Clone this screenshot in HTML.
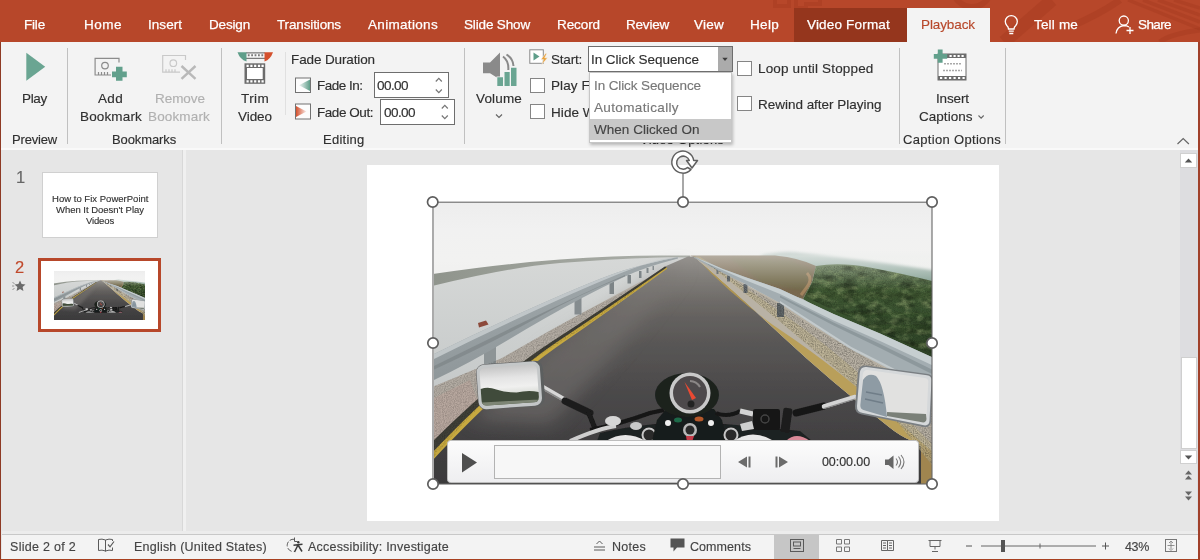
<!DOCTYPE html>
<html><head><meta charset="utf-8"><title>PowerPoint Playback</title>
<style>
html,body{margin:0;padding:0}
body{width:1200px;height:560px;overflow:hidden;position:relative;background:#e6e6e6;font-family:"Liberation Sans",sans-serif}
.a{position:absolute}
.t{position:absolute;white-space:pre;line-height:20px;height:20px;will-change:transform;-webkit-text-stroke:.15px currentColor}
#titlebar{left:0;top:0;width:1200px;height:42px;background:#b7472a}
#ribbon{left:1px;top:42px;width:1197px;height:106px;background:#f3f3f3}
#bl{left:0;top:42px;width:1.3px;height:518px;background:#8e3a24}
#br{left:1198.2px;top:42px;width:1.8px;height:518px;background:#a0402a}
#bb{left:0;top:558.5px;width:1200px;height:1.5px;background:#a8401f}
#status{left:2px;top:534px;width:1196px;height:25px;background:#f3f3f3;border-top:1px solid #c8c8c8;box-sizing:border-box}
.sep{position:absolute;width:1px;background:#c0c0c0;top:48px;height:96px}
.cb{position:absolute;width:13px;height:13px;border:1px solid #858585;background:#fff}
.inp{position:absolute;border:1px solid #6e6e6e;background:#fff;box-sizing:border-box}
</style></head><body>
<div class="a" id="titlebar"></div>
<svg class="a" style="left:0;top:0" width="1200" height="42" viewBox="0 0 1200 42">
<!-- title bar pattern -->
<g fill="none" stroke="#8f2f16" stroke-opacity=".2">
<path d="M775 0 v6 h14 v-6 M796 0 v8 h10 v-4 h14 v-4" stroke-width="4"/>
<circle cx="972" cy="-12" r="19" stroke-width="6"/>
<path d="M1052 0 L1004 42" stroke-width="13"/>
<path d="M1120 0 Q1100 14 1072 26" stroke-width="7"/>
<path d="M1128 0 L1200 29 M1143 0 L1200 22 M1158 0 L1200 15 M1174 0 L1200 8" stroke-width="3.500"/>
<path d="M1200 30 Q1170 34 1160 42" stroke-width="5"/>
</g>
</svg>
<div class="a" style="left:794px;top:8px;width:113px;height:34px;background:#95361d"></div>
<div class="a" style="left:907px;top:8px;width:83px;height:35px;background:#f3f3f3"></div>
<div class="a" id="ribbon"></div>
<!-- ribbon separators -->
<div class="sep" style="left:67px"></div>
<div class="sep" style="left:221px"></div>
<div class="sep" style="left:285px;top:52px;height:63px;background:#e0e0e0"></div>
<div class="sep" style="left:464px"></div>
<div class="sep" style="left:899px"></div>
<div class="sep" style="left:1005px"></div>
<!-- inputs -->
<div class="inp" style="left:374px;top:72px;width:75px;height:26px"></div>
<div class="inp" style="left:380px;top:99px;width:75px;height:26px"></div>
<div class="inp" style="left:588px;top:46px;width:145px;height:26px;z-index:5"></div>
<div class="a" style="left:718px;top:47px;width:14px;height:24px;background:#ababab;z-index:5"></div>
<svg class="a" style="left:718px;top:47px;z-index:6" width="14" height="24" viewBox="0 0 14 24"><path d="M4.300 10.700 h5.400 l-2.700 3.200 z" fill="#3c3c3c"/></svg>
<!-- dropdown -->
<div class="a" style="left:589px;top:72px;width:143px;height:70.5px;background:#fff;border:1px solid #c6c6c6;box-sizing:border-box;box-shadow:1px 2px 3px rgba(0,0,0,.25);z-index:4"></div>
<div class="a" style="left:590px;top:119px;width:141px;height:21px;background:#c8c8c8;z-index:5"></div>
<!-- checkboxes -->
<div class="cb" style="left:529.5px;top:77.5px"></div>
<div class="cb" style="left:529.5px;top:104px"></div>
<div class="cb" style="left:737px;top:60.5px"></div>
<div class="cb" style="left:737px;top:96px"></div>
<!-- workspace -->
<div class="a" style="left:1px;top:148px;width:1197px;height:2px;background:#f9f9f9"></div>
<div class="a" style="left:181.500px;top:150px;width:1px;height:381px;background:#d8d8d8"></div>
<div class="a" style="left:182.500px;top:150px;width:3px;height:381px;background:#f0f0f0"></div>
<!-- thumbs -->
<div class="a" style="left:42px;top:172px;width:116px;height:66px;background:#fff;border:1px solid #d0d0d0;box-sizing:border-box"></div>
<div class="a" style="left:38px;top:258px;width:123px;height:74px;background:#fff;border:3px solid #b7472a;box-sizing:border-box"></div>
<svg class="a" style="left:54px;top:271px" width="91" height="49" viewBox="434 203 498 281" preserveAspectRatio="none"><use href="#scene"/></svg>

<!-- slide -->
<div class="a" style="left:367px;top:165px;width:632px;height:356px;background:#fff"></div>
<svg class="a" style="left:434px;top:203px" width="498" height="281" viewBox="434 203 498 281">
<defs>
<linearGradient id="sky" x1="0" y1="0" x2="0" y2="1"><stop offset="0" stop-color="#ededed"/><stop offset=".3" stop-color="#f1f1f1"/><stop offset=".6" stop-color="#f2f2f1"/><stop offset="1" stop-color="#ededec"/></linearGradient>
<linearGradient id="water" x1="0" y1="0" x2="0" y2="1"><stop offset="0" stop-color="#d6d8d7"/><stop offset="1" stop-color="#c2c6c6"/></linearGradient>
<linearGradient id="road" x1="0" y1="0" x2="0" y2="1"><stop offset="0" stop-color="#96938f"/><stop offset=".1" stop-color="#7f7c78"/><stop offset=".19" stop-color="#6e6b68"/><stop offset=".27" stop-color="#63605e"/><stop offset=".38" stop-color="#585655"/><stop offset=".6" stop-color="#4a4849"/><stop offset=".8" stop-color="#414041"/><stop offset="1" stop-color="#3a393a"/></linearGradient>
<linearGradient id="shore" x1="0" y1="0" x2="1" y2="0"><stop offset="0" stop-color="#8f948c"/><stop offset="1" stop-color="#aeb1ab"/></linearGradient>
<linearGradient id="forest" x1="0" y1="0" x2="0" y2="1"><stop offset="0" stop-color="#4a6339"/><stop offset=".45" stop-color="#3b5430"/><stop offset="1" stop-color="#2a3d23"/></linearGradient>
<linearGradient id="hill" x1="0" y1="0" x2="0" y2="1"><stop offset="0" stop-color="#c3cfcb"/><stop offset=".4" stop-color="#98afa6"/><stop offset="1" stop-color="#6f8f7c"/></linearGradient>
<linearGradient id="haze" x1="0" y1="0" x2="0" y2="1"><stop offset="0" stop-color="#eef0ee" stop-opacity="0"/><stop offset=".15" stop-color="#eef0ee" stop-opacity=".5"/><stop offset="1" stop-color="#eef0ee" stop-opacity="0"/></linearGradient>
<linearGradient id="railL" x1="0" y1="0" x2="0.35" y2="1"><stop offset="0" stop-color="#a4abae"/><stop offset=".5" stop-color="#9aa2a5"/><stop offset="1" stop-color="#8c9497"/></linearGradient>
<linearGradient id="chrome" x1="0" y1="0" x2="0" y2="1"><stop offset="0" stop-color="#f2f2f2"/><stop offset=".5" stop-color="#b5b5b5"/><stop offset="1" stop-color="#e2e2e2"/></linearGradient>
<linearGradient id="mirL" x1="0" y1="0" x2="0" y2="1"><stop offset="0" stop-color="#c6c6c6"/><stop offset=".3" stop-color="#e4e4e4"/><stop offset=".55" stop-color="#f0f0ef"/><stop offset=".7" stop-color="#dfe1dd"/></linearGradient>
<linearGradient id="bar" x1="0" y1="0" x2="0" y2="1"><stop offset="0" stop-color="#fcfcfc"/><stop offset="1" stop-color="#eeeef0"/></linearGradient>
<filter id="soft" x="-2%" y="-2%" width="104%" height="104%"><feGaussianBlur stdDeviation="0.7"/></filter>
<filter id="soft3" x="-30%" y="-30%" width="160%" height="160%"><feGaussianBlur stdDeviation="9"/></filter>
<filter id="soft2"><feGaussianBlur stdDeviation="1.6"/></filter>
<filter id="grain" x="0" y="0" width="100%" height="100%"><feTurbulence type="fractalNoise" baseFrequency="0.9" numOctaves="2" seed="3" result="n"/><feColorMatrix in="n" type="matrix" values="0 0 0 0 0  0 0 0 0 0  0 0 0 0 0  1.2 1.2 1.2 0 -1.45" result="m"/><feComposite in="m" in2="SourceGraphic" operator="in"/></filter>
<filter id="blotch" x="0" y="0" width="100%" height="100%"><feTurbulence type="fractalNoise" baseFrequency="0.07 0.12" numOctaves="3" seed="8" result="n"/><feColorMatrix in="n" type="matrix" values="0 0 0 0 0  0 0 0 0 0  0 0 0 0 0  2.2 0 0 0 -0.95" result="m"/><feComposite in="m" in2="SourceGraphic" operator="in"/></filter>
<filter id="blotchL" x="0" y="0" width="100%" height="100%"><feTurbulence type="fractalNoise" baseFrequency="0.09 0.14" numOctaves="3" seed="21" result="n"/><feColorMatrix in="n" type="matrix" values="0 0 0 0 0.55  0 0 0 0 0.68  0 0 0 0 0.3  0 2.2 0 0 -1.05" result="m"/><feComposite in="m" in2="SourceGraphic" operator="in"/></filter>
<clipPath id="pc"><rect x="434" y="203" width="498" height="281"/></clipPath>
</defs>
<g clip-path="url(#pc)">
<g id="scene">
<g filter="url(#soft)">
<!-- sky -->
<rect x="430" y="200" width="506" height="100" fill="url(#sky)"/>
<rect x="430" y="290" width="506" height="200" fill="#c8cbca"/>
<!-- water -->
<path d="M430 280 L560 261 L690 256 L700 320 L430 420 Z" fill="url(#water)"/>
<!-- far shore -->
<path d="M430 274.500 Q500 264 560 259.600 T668 255.600 L690 255.500 L690 257.400 L668 257.200 Q610 259 560 263 T430 286.500 Z" fill="url(#shore)"/>
<!-- right far hills -->
<path d="M760 256 Q778 251.500 795 252.500 Q832 256 888 263.500 L936 270.500 L936 292 L770 266 Z" fill="url(#hill)" filter="url(#soft2)"/>
<!-- brown field -->
<path d="M690 255.500 L775 255.500 Q800 258 816 266 L812 282 L803 299 L745 280 Z" fill="#78674f"/>
<path d="M730 258 L790 260 L812 270 L806 292 L760 282 Z" fill="#6f6a48" opacity=".7" filter="url(#soft2)"/>
<!-- forest -->
<path d="M816 266 Q840 262 870 267.500 T936 282 L936 365 L880 345 L803 299 L812 282 Z" fill="url(#forest)"/>
<path d="M807 273 q6 6 0 14 l-6 8" stroke="#ad8a62" stroke-width="3" fill="none" opacity=".8"/>
<rect x="690" y="250" width="250" height="40" fill="url(#haze)"/>
<!-- road -->
<path d="M688 256.500 L694 256.500 Q735 292 782 336 T889 427 Q900 436 912 441 L921 446 L921 490 L420 490 L428 446 Q497 377 552 341.500 Q606 306.500 665 266.500 Z" fill="url(#road)"/>
<path d="M660 272 Q600 316 548 348 L470 420 L550 425 Q630 340 685 265 Z" fill="#7a7774" opacity=".5" filter="url(#soft3)"/>
<!-- right shoulder gravel -->
<path d="M694 256.500 Q735 292 782 336 T889 427 Q900 436 912 441 L921 446 L921 490 L940 490 L940 395 L880 364 L815.700 326.400 L780 303 L745 284 L700 257 Z" fill="#b9b2a5"/>
<path d="M694 256.500 Q735 292 782 336 T889 427 Q900 436 912 441 L921 446 L921 490 L936 490 L936 455 L897 421 Q834 366 784 332.500 T695 256.500 Z" fill="#b89b4c" opacity=".85"/>
<path d="M921 446 L936 452 L936 490 L921 490 Z" fill="#8d6f47" opacity=".55"/>
<path d="M697 256.500 Q745 292 790 330 T898 423 L936 470 L940 452 L900 412 Q850 362 800 326 T699 256.500 Z" fill="#c2b590" opacity=".6"/>
<!-- left gravel strip -->
<path d="M430 388 L501 358.500 L551 330 L582 313 L640 282 L660 272 L656 276 Q600 318 548 350 T430 462 Z" fill="#b3aca3"/>
<path d="M430 400 L470 380 L480 407 L434 452 Z" fill="#b9a89e" opacity=".8"/>
<!-- left dark strip + yellow line -->
<path d="M665 266.500 Q606 306.500 552 341.500 Q497 377 428 446 L428 458 Q500 383 554 346 Q608 309.500 667 268 Z" fill="#403f38"/>
<path d="M667 267.300 Q608 308.300 554 344 Q500 381 430 455 L430 463 Q502 385.500 556 347.500 Q609 311 667 268.700 Z" fill="#c7a940"/>
<!-- left posts -->
<rect x="484" y="346" width="12" height="18" fill="#8d9496"/>
<rect x="574.500" y="297" width="7" height="17.500" fill="#858c8f"/>
<rect x="609.500" y="282" width="4.500" height="12" fill="#7d8487"/>
<rect x="627.500" y="275" width="3.500" height="8.500" fill="#7d8487"/>
<rect x="639" y="271" width="2.500" height="7" fill="#7d8487"/><rect x="646.500" y="268" width="2" height="5" fill="#80878a"/><rect x="652.500" y="266" width="1.500" height="4" fill="#858c8f"/>
<!-- left rail -->
<path d="M678 257 Q650 262.500 625 270 T534 307 Q480 331 430 356 L430 382 Q470 363 508 340 T581 298.500 Q605 286 625 276.500 T678 258.500 Z" fill="url(#railL)"/>
<path d="M678 257 Q650 262.500 625 270 T534 307 Q480 331 430 356 L430 361 Q480 336 534 311 T625 271.500 T678 257.500 Z" fill="#c2c8ca" opacity=".95"/>
<path d="M430 368 Q480 343 534 317 T625 275 L625 276.300 Q580 294 534 319.500 T430 371.500 Z" fill="#7f878a" opacity=".8"/>
<path d="M478 323 l8 -2.500 l2.500 4 l-9.500 3 z" fill="#8c4a3a"/>
<!-- right posts -->
<rect x="777" y="303" width="7" height="14" fill="#62686a"/>
<rect x="743.500" y="284" width="4" height="9" fill="#666c6f"/>
<rect x="727" y="275.500" width="3" height="6" fill="#6a7073"/>
<rect x="716.500" y="270" width="2" height="4" fill="#70777a"/>
<!-- right rail -->
<path d="M694 256.800 L708 262.500 L723 269 L745 277 L780 289 L833.600 314 L880 333.600 L936 359 L936 393 L880 364 L851.400 349.600 L815.700 326.400 L780 303 L745 284 L708 265.500 L694 257.800 Z" fill="#a3adb1"/>
<path d="M694 256.800 L708 262.500 L723 269 L745 277 L780 289 L833.600 314 L880 333.600 L936 359 L936 367 L880 341 L833.600 320.500 L780 294 L745 280 L708 263.800 Z" fill="#c6ced0"/>
<path d="M780 297.500 L833.600 325.500 L880 348 L936 376 L936 371.500 L880 344 L833.600 322.500 L780 295.500 Z" fill="#8d989c"/>
<path d="M780 301 L815.700 324 L851.400 347 L880 361.500 L936 390 L936 393 L880 364 L851.400 349.600 L815.700 326.400 L780 303 Z" fill="#c3cacc"/>
</g>
<!-- grain overlays -->
<path d="M705 262 Q745 292 790 330 T898 423 L936 470 L940 480 L940 397 L880 366 L815.700 328.400 L780 305 L745 286 Z" fill="#000" filter="url(#grain)" opacity=".3"/>
<path d="M816 268 Q840 263 870 268 T936 282 L936 356 L880 332 L806 297 L812 282 Z" fill="#000" filter="url(#blotch)" opacity=".4"/>
<path d="M816 268 Q840 263 870 268 T936 282 L936 356 L880 332 L806 297 L812 282 Z" fill="#000" filter="url(#blotchL)" opacity=".45"/>
<path d="M816 268 Q840 263 870 268 T936 282 L936 356 L880 332 L806 297 L812 282 Z" fill="#000" filter="url(#grain)" opacity=".18"/>
<path d="M430 388 L501 358.5 L551 330 L582 313 L656 276 Q600 318 548 350 T430 462 Z" fill="#000" filter="url(#grain)" opacity=".18"/>
<g filter="url(#soft)">
<!-- BIKE -->
<!-- left mirror stem -->
<path d="M541 386 L567 401" stroke="#d8d8d8" stroke-width="4.5" stroke-linecap="round"/>
<path d="M541 388 L567 403" stroke="#8a8a8a" stroke-width="1.5"/>
<path d="M565 401 L590 413" stroke="#1d1d1d" stroke-width="7" stroke-linecap="round"/>
<!-- left mirror -->
<g transform="rotate(-4 509.5 385)">
<rect x="477" y="362.500" width="67" height="45.500" rx="8" fill="#5c5e5f"/>
<rect x="477.500" y="363" width="63.500" height="44.500" rx="7.500" fill="#c4c7c8"/>
<rect x="480.500" y="366" width="57.500" height="38" rx="5.500" fill="url(#mirL)"/>
<path d="M480.500 387 Q488 385 496 388.500 T516 393 Q528 391 538 394 L538 398.500 Q538 404 532.500 404 L486 404 Q480.500 404 480.500 398.500 Z" fill="#414c3b"/>
<path d="M481 400.500 L538 401.500 L538 398.500 Q538 404 532.500 404 L486 404 Q480.500 404 480.500 398.500 Z" fill="#7d8574"/>
</g>
<!-- dark base -->
<path d="M597 441 L600 433 Q625 427 655 424 L725 424 Q770 428 800 431 L812 441 Z" fill="#1f2020"/>
<!-- handlebar left -->
<path d="M588 411 L596 431" stroke="#1a1a1a" stroke-width="5"/>
<path d="M590 430 Q620 424 650 413 L664 410" stroke="#151515" stroke-width="4" fill="none"/>
<path d="M570 441 Q600 428 616 426" stroke="#cfcfcf" stroke-width="4" fill="none"/>
<ellipse cx="613" cy="421" rx="8" ry="5" fill="#d6d6d6"/>
<ellipse cx="636" cy="426" rx="6" ry="4" fill="#c9c9c9"/>
<path d="M606 441 Q625 429 646 441 Z" fill="#e6e6e6"/>
<circle cx="649" cy="435" r="7.500" fill="#c8c8c8"/><circle cx="649" cy="435" r="5.500" fill="#2a2a2a"/>
<!-- center dash -->
<path d="M652 441 L657 420 L666 409 L714 409 L722 420 L727 441 Z" fill="#191b1a"/>
<ellipse cx="687" cy="395" rx="32" ry="22" fill="#1c211e"/>
<circle cx="690" cy="393" r="20.500" fill="#c9c9c9"/>
<circle cx="690" cy="393" r="17" fill="#4e4a4b"/>
<path d="M690 381 a12 12 0 0 1 10 6" stroke="#8a8686" stroke-width="2" fill="none"/>
<path d="M684.500 382 L692 400 L696 398 Z" fill="#ea4a33"/>
<circle cx="691" cy="404" r="3.500" fill="#222"/>
<circle cx="668" cy="423" r="3" fill="#f0f0f0"/>
<ellipse cx="678" cy="420" rx="4" ry="2.500" fill="#1f6b4a"/>
<ellipse cx="699" cy="419" rx="4.500" ry="2.500" fill="#b4582a"/>
<circle cx="711" cy="423" r="3" fill="#efefef"/>
<circle cx="690" cy="430" r="7" fill="#b9b9b9"/><circle cx="690" cy="430" r="4.500" fill="#2b2b2b"/>
<path d="M686 436 l8 0 l-2 6 l-5 0 z" fill="#c63a4a"/>
<!-- handlebar right -->
<path d="M716 413 Q728 418 740 411" stroke="#151515" stroke-width="4" fill="none"/>
<path d="M740 411 L753 414" stroke="#d4d4d4" stroke-width="5"/>
<rect x="753" y="409" width="27" height="21" rx="2" fill="#161616"/>
<circle cx="765" cy="419" r="4" fill="none" stroke="#444" stroke-width="1.500"/>
<rect x="782" y="408" width="9" height="24" rx="2" fill="#1c1c1c" transform="rotate(8 786 420)"/>
<path d="M796 413 L824 406" stroke="#191919" stroke-width="7" stroke-linecap="round"/>
<path d="M824 406.500 L855 397" stroke="#d4d4d4" stroke-width="4.500" stroke-linecap="round"/>
<path d="M824 408.500 L855 399" stroke="#8a8a8a" stroke-width="1.300"/>
<circle cx="731" cy="435" r="7.500" fill="#c8c8c8"/><circle cx="731" cy="435" r="5.500" fill="#2a2a2a"/>
<path d="M734 441 Q752 428 774 441 Z" fill="#e8e8e8"/>
<path d="M740 424 l12 -3 l2 8 l-12 2 z" fill="#cfcfcf"/>
<path d="M786 441 q10 -10 24 0 z" fill="#d98a98"/>
<!-- right mirror -->
<path d="M866 365.500 L928 374 Q933 375 933 380 L931 422 Q930 428 924 427 L862 414.500 Q854.500 413 855 406 L858 372 Q859 364.500 866 365.500 Z" fill="#7a7f83"/>
<path d="M866.500 367 L927 375.300 Q931.500 376 931.500 380 L929.500 421 Q929 426 924 425.300 L863 413 Q856.500 412 857 406 L859.700 373 Q860.500 366.200 866.500 367 Z" fill="#d5d8da"/>
<path d="M868 370 L925 378 Q928.500 378.500 928.300 382 L926.500 419 Q926 423 922 422.300 L865 410.500 Q860 409.500 860.300 405 L862.700 375 Q863.300 369.300 868 370 Z" fill="#e1e1e0"/>
<path d="M863 380 Q868 372 876 376 Q884 384 887 417 L865 410.500 Q860 409.500 860.300 405 Z" fill="#8e9ba4"/>
<path d="M866 392 l16 3 M865 399 l18 4" stroke="#6f7d88" stroke-width="1.500"/>
<path d="M887 412 L926 414 L926.500 419 Q926 423 922 422.300 L887 416 Z" fill="#7a8078"/>
</g>
</g>
<!-- control bar -->
<rect x="447.500" y="440.500" width="471" height="42" rx="3" fill="url(#bar)" stroke="#bdbdbd" stroke-width="1"/>
<rect x="494.500" y="445.500" width="226" height="33" fill="#f7f7f7" stroke="#b3b3b3" stroke-width="1"/>
<path d="M462 453 L477 462.500 L462 472.500 Z" fill="#4f4f4f"/>
<path d="M738 462 L747 456.500 L747 467.500 Z M748.500 456.500 h2 v11 h-2 z" fill="#6b6b6b"/>
<path d="M788 462 L779 456.500 L779 467.500 Z M775.500 456.500 h2 v11 h-2 z" fill="#6b6b6b"/>
<path d="M885 459.500 h3.500 l5 -4 v13.500 l-5 -4 h-3.500 z" fill="#666"/>
<path d="M896 458.500 q3 3.500 0 7 M898.500 456.500 q4.500 5.500 0 11 M901 455 q6 7 0 14" stroke="#777" stroke-width="1.100" fill="none"/>
</g>
</svg>

<!-- scrollbar -->
<div class="a" style="left:1180px;top:150px;width:18px;height:382px;background:#dddde0"></div>
<div class="a" style="left:1180px;top:153px;width:17px;height:15px;background:#fff;border:1px solid #d0d0d0;box-sizing:border-box"></div>
<div class="a" style="left:1181px;top:357px;width:16px;height:92px;background:#fff;border:1px solid #cfcfcf;box-sizing:border-box"></div>
<div class="a" style="left:1180px;top:450px;width:17px;height:14px;background:#fff;border:1px solid #d0d0d0;box-sizing:border-box"></div>
<div class="a" style="left:1180px;top:464px;width:17px;height:68px;background:#e6e6e6"></div>
<div class="a" style="left:2px;top:531px;width:1196px;height:3px;background:#ececec"></div>
<div class="a" id="status"></div>
<div class="a" style="left:774px;top:535px;width:45px;height:24px;background:#c6c6c6"></div>
<svg class="a" style="left:0;top:0;z-index:3" width="1200" height="560" viewBox="0 0 1200 560">
<defs>
<linearGradient id="fin" x1="0" y1="0" x2="1" y2="0"><stop offset="0" stop-color="#6aa592" stop-opacity=".1"/><stop offset="1" stop-color="#5f9e8a"/></linearGradient>
<linearGradient id="fout" x1="0" y1="0" x2="1" y2="0"><stop offset="0" stop-color="#d4502d"/><stop offset="1" stop-color="#d4502d" stop-opacity=".1"/></linearGradient>
</defs>
<!-- lightbulb -->
<g fill="none" stroke="#fff" stroke-width="1.300">
<path d="M1008.500 29 Q1008.500 27 1006.800 25.500 A6 6 0 1 1 1015.800 25.500 Q1014 27 1014 29 Z"/>
<path d="M1008.800 31.200 h5 M1009.300 33.500 h4"/>
<circle cx="1123.800" cy="20.600" r="4.600"/>
<path d="M1116 33.500 Q1117 26.500 1123.800 25.500 Q1127 25.500 1129 27"/>
<path d="M1126.500 30.500 h7 M1130 27 v7"/>
</g>
<!-- Play icon -->
<path d="M26.300 52.700 L45.200 66.700 L26.300 80.800 Z" fill="#6aa592"/>
<!-- Add bookmark -->
<g fill="none" stroke="#8c8c8c" stroke-width="1.200">
<path d="M119 62.500 V58.300 H95.100 V75 H111"/>
<circle cx="105" cy="65.600" r="3.300"/>
<path d="M98.500 75 v-3 M101.500 75 v-3 M104.500 75 v-3 M107.500 75 v-3"/>
</g>
<path d="M116 66.800 h6.500 v4.600 h4.300 v5.900 h-4.300 v3.500 h-6.500 v-3.500 h-4 v-5.900 h4 z" fill="#62a08c"/>
<!-- Remove bookmark (disabled) -->
<g fill="none" stroke="#c9c9c9" stroke-width="1.200">
<path d="M185.500 60 V55.500 H162.700 V72.200 H180"/>
<circle cx="173.300" cy="63.200" r="3.300"/>
<path d="M166 72.200 v-3 M169 72.200 v-3 M172 72.200 v-3 M175 72.200 v-3"/>
</g>
<path d="M181.500 66 L195.500 78.800 M195.500 66 L181.500 78.800" stroke="#b9b9b9" stroke-width="2.400" fill="none"/>
<!-- Trim video -->
<rect x="246" y="52.300" width="19" height="6.200" fill="#fafafa"/>
<path d="M246 52.800 h19 M246 58.300 h19" stroke="#7a7a7a" stroke-width="1.200"/>
<path d="M247.800 54.300 h1.800 v2 h-1.800 z M251.200 54.300 h1.800 v2 h-1.800 z M254.600 54.300 h1.800 v2 h-1.800 z M258 54.300 h1.800 v2 h-1.800 z M261.400 54.300 h1.800 v2 h-1.800 z" fill="#7a7a7a"/>
<path d="M237.500 52.300 H246.500 V61.500 Q240 59.500 237.500 52.300 Z" fill="#5f9e8a"/>
<path d="M273 52.300 H264.500 V61.500 Q270.500 59.500 273 52.300 Z" fill="#d4502d"/>
<rect x="244.500" y="63.300" width="20.700" height="20.500" fill="#6c6c6c"/>
<rect x="247" y="68" width="15.700" height="11" fill="#fff"/>
<path d="M246.500 64.700 h2.200 v2.200 h-2.200 z M250.300 64.700 h2.200 v2.200 h-2.200 z M254.100 64.700 h2.200 v2.200 h-2.200 z M257.900 64.700 h2.200 v2.200 h-2.200 z M261.500 64.700 h2.200 v2.200 h-2.200 z M246.500 80.300 h2.200 v2.200 h-2.200 z M250.300 80.300 h2.200 v2.200 h-2.200 z M254.100 80.300 h2.200 v2.200 h-2.200 z M257.900 80.300 h2.200 v2.200 h-2.200 z M261.500 80.300 h2.200 v2.200 h-2.200 z" fill="#fff"/>
<!-- fade icons -->
<rect x="295.500" y="78" width="15" height="14.500" fill="#fdfdfd" stroke="#727272" stroke-width="1"/>
<path d="M299 85.200 L310 79.500 V91 Z" fill="url(#fin)"/>
<rect x="295.500" y="104" width="15" height="15" fill="#fdfdfd" stroke="#727272" stroke-width="1"/>
<path d="M296 106 L306.500 111.500 L296 117 Z" fill="url(#fout)"/>
<!-- spinners -->
<g fill="none" stroke="#777" stroke-width="1.200">
<path d="M435.800 81.500 l3 -3.200 l3 3.200 M435.800 89.500 l3 3.200 l3 -3.200"/>
<path d="M441.800 108.500 l3 -3.200 l3 3.200 M441.800 115.500 l3 3.200 l3 -3.200"/>
</g>
<!-- Volume icon -->
<path d="M483 62.600 h7 l10 -10 v27 l-10 -6.300 h-7 z" fill="#8a8a8a"/>
<path d="M503 56.500 Q509 61 508.300 70 M506.500 54.500 Q513 58.500 513.500 66" stroke="#8a8a8a" stroke-width="2" fill="none"/>
<path d="M496.500 76.500 h7 v10 h-7 z M504 71.500 h6 v15 h-6 z M510.500 67.200 h6.500 v19.300 h-6.500 z" fill="#f3f3f3"/>
<path d="M497.300 77.200 h5.700 v8.800 h-5.700 z M504.500 72 h5.200 v14 h-5.200 z M511 67.700 h5.500 v18.300 h-5.500 z" fill="#6aa592"/>
<path d="M496 114.500 l3 3 l3 -3" stroke="#666" stroke-width="1.200" fill="none"/>
<!-- Start icon -->
<rect x="529.800" y="49.800" width="13.500" height="13.500" fill="#fff" stroke="#8a8a8a" stroke-width="1"/>
<path d="M533.500 52.500 L539.500 56.500 L533.500 60.500 Z" fill="#5f9e8a"/>
<path d="M545.500 53.500 L541 59.500 h2.600 L541.500 65 L547.500 57.800 h-2.800 L546.800 53.500 Z" fill="#eaa23a" stroke="#f3f3f3" stroke-width=".5"/>
<!-- Insert captions -->
<rect x="938" y="54" width="28" height="26" fill="#fff" stroke="#6c6c6c" stroke-width="1"/>
<rect x="938" y="54" width="28" height="4" fill="#6c6c6c"/>
<rect x="938" y="76" width="28" height="4" fill="#6c6c6c"/>
<path d="M949.500 55 h2.200 v2 h-2.200 z M953.500 55 h2.200 v2 h-2.200 z M957.500 55 h2.200 v2 h-2.200 z M961.500 55 h2.200 v2 h-2.200 z M940 77 h2.200 v2 h-2.200 z M944.500 77 h2.200 v2 h-2.200 z M949 77 h2.200 v2 h-2.200 z M953.500 77 h2.200 v2 h-2.200 z M958 77 h2.200 v2 h-2.200 z M962.500 77 h2.200 v2 h-2.200 z" fill="#fff"/>
<path d="M944 63.700 h18 M943 70.500 h19" stroke="#a9a9a9" stroke-width="1.600" stroke-dasharray="2 1"/>
<path d="M937.800 49.500 h4.800 v4.500 h4.600 v4.800 h-4.600 v4 h-4.800 v-4 h-4 v-4.800 h4 z" fill="#62a08c"/>
<path d="M978.500 115.500 l2.600 2.600 l2.600 -2.600" stroke="#666" stroke-width="1.100" fill="none"/>
<!-- collapse ribbon caret -->
<path d="M1177.500 144 l5.700 -5.500 l5.700 5.500" stroke="#666" stroke-width="1.200" fill="none"/>
<!-- scrollbar arrows -->
<path d="M1184.800 162.500 l3.700 -4 l3.700 4 z" fill="#555"/>
<path d="M1184.800 455.500 l3.700 4 l3.700 -4 z" fill="#555"/>
<path d="M1185 474.500 l3.500 -4 l3.500 4 z M1185 479.500 l3.500 -4 l3.500 4 z" fill="#666"/>
<path d="M1185 491.500 l3.500 4 l3.500 -4 z M1185 496.500 l3.500 4 l3.500 -4 z" fill="#666"/>
<!-- video frame + handles -->
<rect x="433" y="202.200" width="499" height="281.800" fill="none" stroke="#666" stroke-width="1.100"/>
<path d="M683 174 V197" stroke="#6e6e6e" stroke-width="1.200"/>
<g fill="#fff" stroke="#5e5e5e" stroke-width="1.700">
<circle cx="432.700" cy="202" r="5.200"/><circle cx="683" cy="202" r="5.200"/><circle cx="932" cy="202" r="5.200"/>
<circle cx="433" cy="343" r="5.200"/><circle cx="932" cy="343" r="5.200"/>
<circle cx="433" cy="484" r="5.200"/><circle cx="683" cy="484" r="5.200"/><circle cx="932" cy="484" r="5.200"/>
</g>
<!-- rotate handle -->
<path d="M691 169.500 A11 11 0 1 1 693.700 160.500 L697.500 160.500 L692 168 L686.500 160.500 L689.300 160.500 A6.500 6.500 0 1 0 687.500 167.500 Z" fill="#fff" stroke="#606060" stroke-width="1.500" stroke-linejoin="round"/>
<!-- star -->
<path d="M20 280.500 l1.600 3.600 l3.900 .4 l-2.900 2.600 l.8 3.900 l-3.400 -2 l-3.400 2 l.8 -3.900 l-2.900 -2.600 l3.900 -.4 z" fill="#6a6a6a"/>
<path d="M12.500 282.500 l2 1 M12 286 h2.200 M12.500 289.500 l2 -1" stroke="#8a8a8a" stroke-width=".9"/>
<!-- status icons -->
<g fill="none" stroke="#5a5a5a" stroke-width="1" transform="translate(0,-1)">
<path d="M105.500 541 v11.500 M105.500 541 q-3.500 -1.500 -7 -.5 v11 q3.500 -1 7 .5 q3.500 -1.500 7 -.5 v-3 M105.500 541 q3.500 -1.500 7 -.5 v1.500"/>
<path d="M108 545.500 l2 2.300 l4 -5.300" stroke-width="1.200"/>
<path d="M294.500 540.300 A6.200 6.200 0 1 0 293.500 552.600" stroke-dasharray="5 1.800"/>
<path d="M294.500 538.500 v4 h3"/>
<path d="M293.500 546.300 l9 -1 M298 546 l-3.500 7 M298 546 l4 6.500" stroke="#3c3c3c" stroke-width="1.500"/>
<circle cx="298.300" cy="543.300" r="1.200" fill="#3c3c3c" stroke="none"/>
<path d="M594 548 h11 M594 551 h11 M596.500 545 l3 -3 l3 3"/>
<rect x="790.500" y="540.500" width="13" height="12"/><rect x="793.500" y="543" width="7" height="4"/><path d="M793.500 549.500 h7"/>
<path d="M836.500 540.500 h5 v4.500 h-5 z M844.500 540.500 h5 v4.500 h-5 z M836.500 548 h5 v4.500 h-5 z M844.500 548 h5 v4.500 h-5 z" stroke="#777"/>
<path d="M881.500 541.500 h6 v10 h-6 z M887.500 541.500 h6 v10 h-6 z M883 544 h3 M883 546.500 h3 M883 549 h3 M889 544 h3 M889 546.500 h3 M889 549 h3" stroke="#666"/>
<path d="M928.500 541.500 h13 M930 541.500 v6 h10 v-6 M935 547.500 v3 M932 552.500 h6" stroke="#666"/>
<path d="M966 547 h6" stroke="#555"/>
<path d="M981 547 h115" stroke="#666"/>
<path d="M1040 544.500 v5" stroke="#666"/>
<path d="M1102 547 h7 M1105.500 543.500 v7" stroke="#555"/>
<rect x="1165.500" y="540.500" width="11" height="12" stroke="#777"/>
<path d="M1169 544 l2 -2 l2 2 M1169 549.500 l2 2 l2 -2 M1167.500 546.500 h7 M1171 543 v7" stroke="#777" stroke-width=".8"/>
</g>
<rect x="1001" y="540" width="4" height="12" fill="#555"/>
<path d="M670.500 538.500 h14 v9 h-7.500 l-3.500 4 v-4 h-3 z" fill="#555"/>
</svg>

<span class="t" style="left:24.0px;top:15.4px;font-size:13.5px;color:#fff;letter-spacing:-0.19px;-webkit-text-stroke:.25px #fff;">File</span>
<span class="t" style="left:84.0px;top:15.4px;font-size:13.5px;color:#fff;letter-spacing:0.50px;-webkit-text-stroke:.25px #fff;">Home</span>
<span class="t" style="left:148.0px;top:15.4px;font-size:13.5px;color:#fff;letter-spacing:0.04px;-webkit-text-stroke:.25px #fff;">Insert</span>
<span class="t" style="left:209.0px;top:15.4px;font-size:13.5px;color:#fff;letter-spacing:-0.17px;-webkit-text-stroke:.25px #fff;">Design</span>
<span class="t" style="left:277.0px;top:15.4px;font-size:13.5px;color:#fff;letter-spacing:-0.14px;-webkit-text-stroke:.25px #fff;">Transitions</span>
<span class="t" style="left:368.0px;top:15.4px;font-size:13.5px;color:#fff;letter-spacing:0.32px;-webkit-text-stroke:.25px #fff;">Animations</span>
<span class="t" style="left:464.0px;top:15.4px;font-size:13.5px;color:#fff;letter-spacing:-0.15px;-webkit-text-stroke:.25px #fff;">Slide Show</span>
<span class="t" style="left:557.0px;top:15.4px;font-size:13.5px;color:#fff;letter-spacing:-0.09px;-webkit-text-stroke:.25px #fff;">Record</span>
<span class="t" style="left:626.0px;top:15.4px;font-size:13.5px;color:#fff;letter-spacing:-0.21px;-webkit-text-stroke:.25px #fff;">Review</span>
<span class="t" style="left:694.0px;top:15.4px;font-size:13.5px;color:#fff;letter-spacing:0.24px;-webkit-text-stroke:.25px #fff;">View</span>
<span class="t" style="left:750.0px;top:15.4px;font-size:13.5px;color:#fff;letter-spacing:0.31px;-webkit-text-stroke:.25px #fff;">Help</span>
<span class="t" style="left:807.0px;top:15.4px;font-size:13.5px;color:#fff;letter-spacing:0.18px;-webkit-text-stroke:.25px #fff;">Video Format</span>
<span class="t" style="left:1034.0px;top:15.4px;font-size:13.5px;color:#fff;letter-spacing:0.18px;-webkit-text-stroke:.25px #fff;">Tell me</span>
<span class="t" style="left:1138.0px;top:15.4px;font-size:13.5px;color:#fff;letter-spacing:-0.61px;-webkit-text-stroke:.25px #fff;">Share</span>
<span class="t" style="left:921.0px;top:15.4px;font-size:13.5px;color:#b7472a;letter-spacing:-0.10px;">Playback</span>
<span class="t" style="left:22.0px;top:89.0px;font-size:13.5px;color:#2f2f2f;letter-spacing:-0.32px;">Play</span>
<span class="t" style="left:12.0px;top:129.5px;font-size:13px;color:#2f2f2f;letter-spacing:-0.18px;">Preview</span>
<span class="t" style="left:98.0px;top:89.0px;font-size:13.5px;color:#2f2f2f;letter-spacing:0.32px;">Add</span>
<span class="t" style="left:80.0px;top:107.0px;font-size:13.5px;color:#2f2f2f;letter-spacing:0.15px;">Bookmark</span>
<span class="t" style="left:155.0px;top:89.0px;font-size:13.5px;color:#b0b0b0;letter-spacing:-0.05px;">Remove</span>
<span class="t" style="left:148.0px;top:107.0px;font-size:13.5px;color:#b0b0b0;letter-spacing:0.15px;">Bookmark</span>
<span class="t" style="left:112.0px;top:129.5px;font-size:13px;color:#2f2f2f;letter-spacing:-0.11px;">Bookmarks</span>
<span class="t" style="left:241.0px;top:89.0px;font-size:13.5px;color:#2f2f2f;letter-spacing:0.38px;">Trim</span>
<span class="t" style="left:238.0px;top:107.0px;font-size:13.5px;color:#2f2f2f;letter-spacing:-0.06px;">Video</span>
<span class="t" style="left:291.0px;top:49.5px;font-size:13.5px;color:#2f2f2f;letter-spacing:-0.12px;">Fade Duration</span>
<span class="t" style="left:317.0px;top:76.0px;font-size:13.5px;color:#2f2f2f;letter-spacing:-0.50px;">Fade In:</span>
<span class="t" style="left:317.0px;top:102.5px;font-size:13.5px;color:#2f2f2f;letter-spacing:-0.45px;">Fade Out:</span>
<span class="t" style="left:377.0px;top:76.0px;font-size:13.5px;color:#2f2f2f;letter-spacing:-0.56px;">00.00</span>
<span class="t" style="left:384.0px;top:102.5px;font-size:13.5px;color:#2f2f2f;letter-spacing:-0.56px;">00.00</span>
<span class="t" style="left:322.5px;top:129.5px;font-size:13px;color:#2f2f2f;letter-spacing:0.25px;">Editing</span>
<span class="t" style="left:476.0px;top:89.0px;font-size:13.5px;color:#2f2f2f;letter-spacing:0.16px;">Volume</span>
<span class="t" style="left:551.0px;top:49.5px;font-size:13.5px;color:#2f2f2f;letter-spacing:-0.21px;">Start:</span>
<span class="t" style="left:591.0px;top:49.5px;font-size:13.5px;color:#2f2f2f;letter-spacing:-0.05px;z-index:6;">In Click Sequence</span>
<span class="t" style="left:550.5px;top:76.0px;font-size:13.5px;color:#2f2f2f;letter-spacing:0.08px;">Play Full Screen</span>
<span class="t" style="left:550.5px;top:102.5px;font-size:13.5px;color:#2f2f2f;letter-spacing:0.07px;">Hide While Not Playing</span>
<span class="t" style="left:757.5px;top:58.5px;font-size:13.5px;color:#2f2f2f;letter-spacing:0.16px;">Loop until Stopped</span>
<span class="t" style="left:757.5px;top:94.5px;font-size:13.5px;color:#2f2f2f;letter-spacing:-0.02px;">Rewind after Playing</span>
<span class="t" style="left:640.0px;top:129.5px;font-size:13px;color:#2f2f2f;letter-spacing:0.20px;">Video Options</span>
<span class="t" style="left:936.0px;top:89.0px;font-size:13.5px;color:#2f2f2f;letter-spacing:-0.13px;">Insert</span>
<span class="t" style="left:919.0px;top:107.0px;font-size:13.5px;color:#2f2f2f;letter-spacing:0.03px;">Captions</span>
<span class="t" style="left:903.0px;top:129.5px;font-size:13px;color:#2f2f2f;letter-spacing:0.32px;">Caption Options</span>
<span class="t" style="left:594.0px;top:76.0px;font-size:13.5px;color:#777;letter-spacing:-0.11px;z-index:6;">In Click Sequence</span>
<span class="t" style="left:594.0px;top:98.0px;font-size:13.5px;color:#777;letter-spacing:0.36px;z-index:6;">Automatically</span>
<span class="t" style="left:594.0px;top:119.5px;font-size:13.5px;color:#444;letter-spacing:0.03px;z-index:6;">When Clicked On</span>
<span class="t" style="left:15.5px;top:167.0px;font-size:16.5px;color:#666;letter-spacing:-2.19px;">1</span>
<span class="t" style="left:14.5px;top:257.0px;font-size:16.5px;color:#c0492b;letter-spacing:-0.19px;">2</span>
<span class="t" style="left:52.0px;top:189.0px;font-size:9.5px;color:#333;letter-spacing:0.02px;">How to Fix PowerPoint</span>
<span class="t" style="left:56.0px;top:199.7px;font-size:9.5px;color:#333;letter-spacing:-0.02px;">When It Doesn't Play</span>
<span class="t" style="left:86.0px;top:210.5px;font-size:9.5px;color:#333;letter-spacing:-0.15px;">Videos</span>
<span class="t" style="left:822.0px;top:452.0px;font-size:12.5px;color:#333;letter-spacing:-0.08px;">00:00.00</span>
<span class="t" style="left:10.0px;top:537.0px;font-size:12.5px;color:#444;letter-spacing:0.29px;">Slide 2 of 2</span>
<span class="t" style="left:134.0px;top:537.0px;font-size:12.5px;color:#444;letter-spacing:0.22px;">English (United States)</span>
<span class="t" style="left:308.0px;top:537.0px;font-size:12.5px;color:#444;letter-spacing:0.21px;">Accessibility: Investigate</span>
<span class="t" style="left:612.0px;top:537.0px;font-size:12.5px;color:#444;letter-spacing:0.27px;">Notes</span>
<span class="t" style="left:690.0px;top:537.0px;font-size:12.5px;color:#444;letter-spacing:0.07px;">Comments</span>
<span class="t" style="left:1125.0px;top:537.0px;font-size:12.5px;color:#444;letter-spacing:-0.34px;">43%</span>
<div class="a" id="bl"></div><div class="a" id="br"></div><div class="a" id="bb"></div>
</body></html>
